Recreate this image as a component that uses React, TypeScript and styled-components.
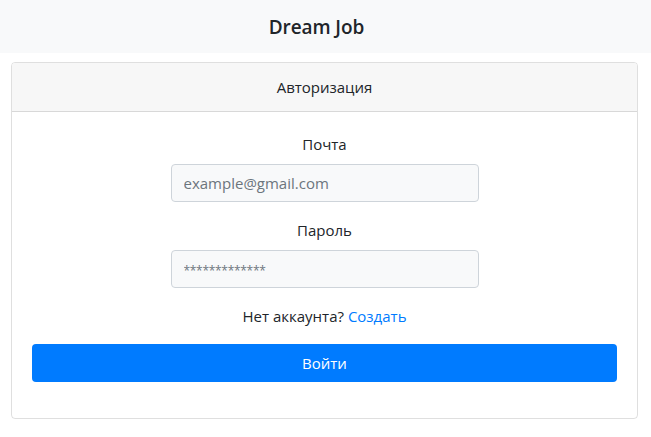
import React from "react";
import styled, { createGlobalStyle } from "styled-components";

const Global = createGlobalStyle`
  html, body { margin: 0; padding: 0; background: #fff; }
  body {
    font-family: "Open Sans", "Liberation Sans", sans-serif;
    font-size: 16px;
    line-height: 24px;
    color: #212529;
  }
  * { box-sizing: border-box; }
`;

const Navbar = styled.nav`
  height: 53px;
  background: #f8f9fa;
  display: flex;
  align-items: center;
  justify-content: center;
  padding-right: 18px;
`;

const Brand = styled.a`
  font-size: 19px;
  font-weight: 600;
  color: #212529;
  text-decoration: none;
  letter-spacing: -0.1px;
`;

const Card = styled.div`
  margin: 9px 13px 0 11px;
  border: 1px solid rgba(0, 0, 0, 0.125);
  border-radius: 4px;
  overflow: hidden;
`;

const CardHeader = styled.div`
  height: 49px;
  background: #f7f7f7;
  border-bottom: 1px solid rgba(0, 0, 0, 0.125);
  display: flex;
  align-items: center;
  justify-content: center;
  font-size: 15px;
`;

const CardBody = styled.form`
  padding: 20px 20px 20px;
  display: flex;
  flex-direction: column;
  align-items: center;
`;

const Group = styled.div`
  display: flex;
  flex-direction: column;
  align-items: center;
  margin-bottom: 16px;
`;

const Label = styled.label`
  font-size: 15px;
  margin-bottom: 8px;
`;

const Input = styled.input<{ $small?: boolean }>`
  width: 308px;
  height: 38px;
  padding: 6px 12px;
  border: 1px solid #ced4da;
  border-radius: 4px;
  background: #f8f9fa;
  font-family: inherit;
  font-size: 15px;
  color: #495057;
  outline: none;
  &::placeholder {
    color: #6c757d;
    font-size: ${(p) => (p.$small ? "12px" : "15px")};
    letter-spacing: ${(p) => (p.$small ? "-0.3px" : "0")};
  }
`;

const Note = styled.div`
  font-size: 15px;
  margin-bottom: 16px;
`;

const Link = styled.a`
  color: #007bff;
  text-decoration: none;
`;

const Button = styled.button`
  width: 100%;
  height: 38px;
  border: none;
  border-radius: 4px;
  background: #007bff;
  color: #fff;
  font-family: inherit;
  font-size: 15px;
  margin-bottom: 16px;
`;

export default function App() {
  return (
    <>
      <Global />
      <Navbar>
        <Brand href="#">Dream Job</Brand>
      </Navbar>
      <Card>
        <CardHeader>Авторизация</CardHeader>
        <CardBody onSubmit={(e) => e.preventDefault()}>
          <Group>
            <Label>Почта</Label>
            <Input type="email" placeholder="example@gmail.com" />
          </Group>
          <Group>
            <Label>Пароль</Label>
            <Input $small type="password" placeholder="*************" />
          </Group>
          <Note>
            Нет аккаунта? <Link href="#">Создать</Link>
          </Note>
          <Button type="submit">Войти</Button>
        </CardBody>
      </Card>
    </>
  );
}
